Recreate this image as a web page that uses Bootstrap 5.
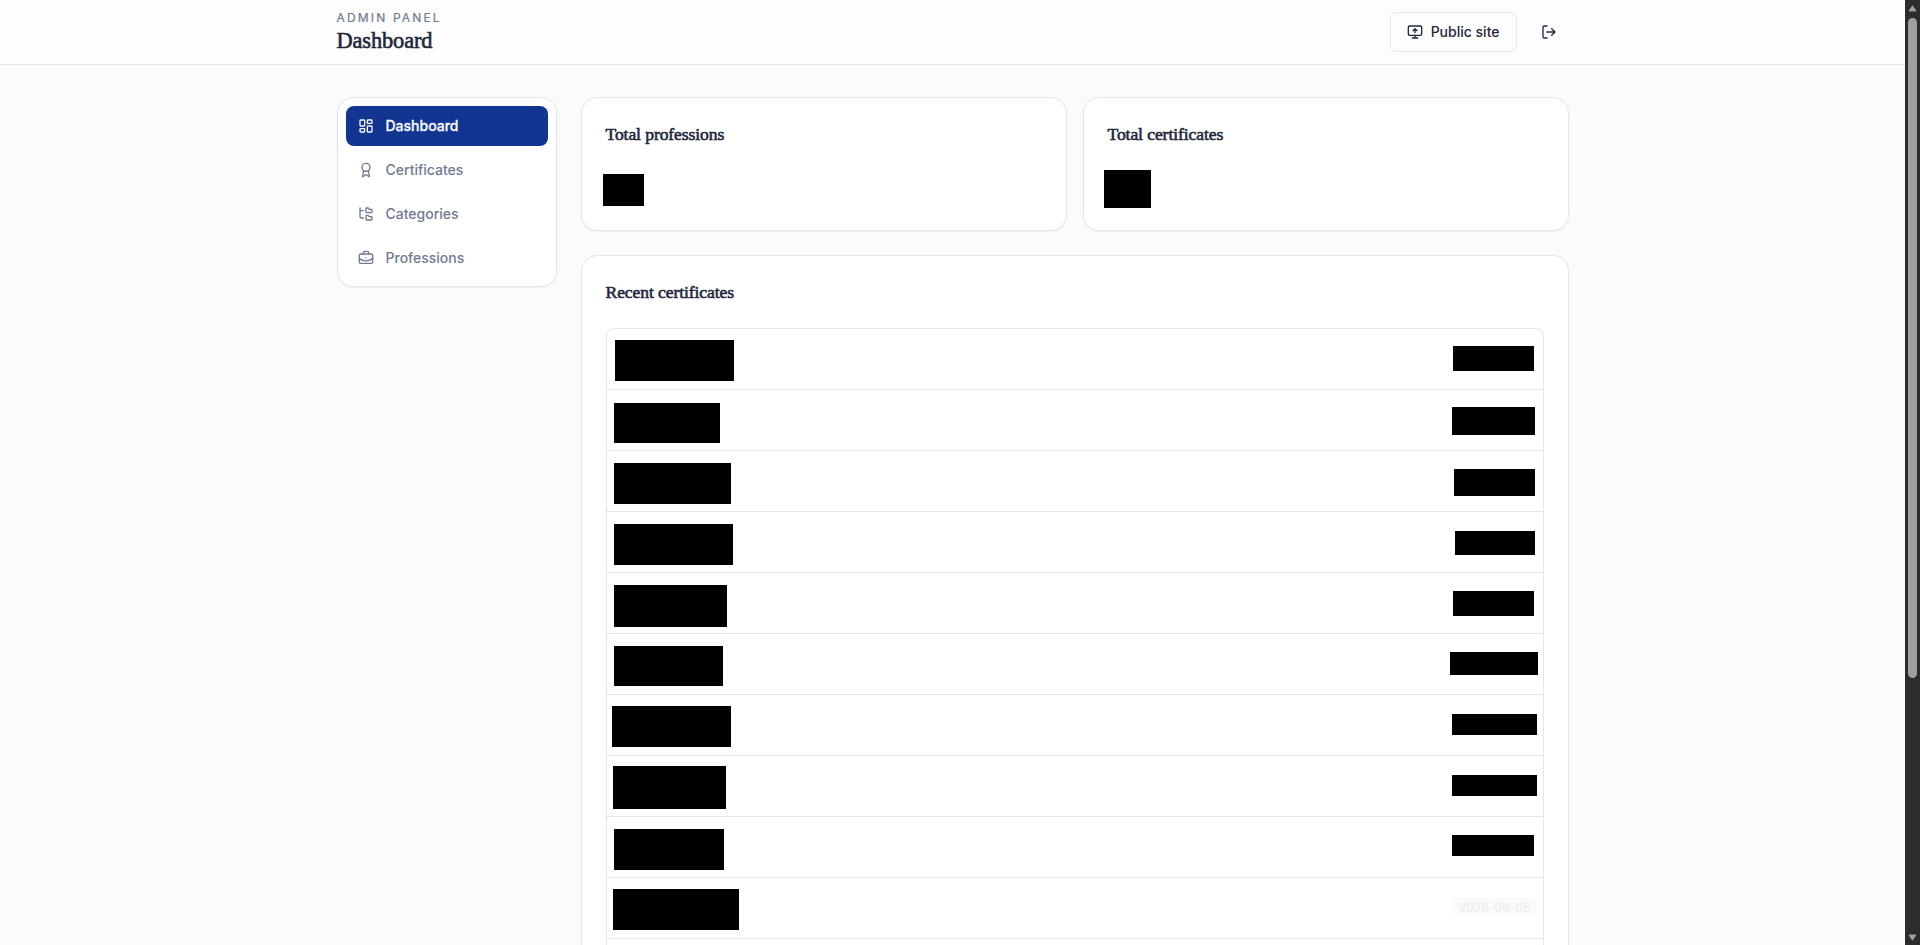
<!DOCTYPE html>
<html lang="en">
<head>
<meta charset="utf-8">
<meta name="viewport" content="width=device-width, initial-scale=1">
<title>Dashboard</title>
<link href="https://cdn.jsdelivr.net/npm/bootstrap@5.3.0/dist/css/bootstrap.min.css" rel="stylesheet">
<style>
  :root { --line: #e4e7e9; --ink: #1d283a; --muted: #6f7b8f; --brand: #133592; }
  html, body { height: 100%; overflow: hidden; }
  body { font-family: Inter, "Liberation Sans", sans-serif; font-size: 14px; line-height: 20px; color: var(--ink); background: #fbfbfb; padding-right: 15px; }
  svg { flex: none; }
  .ico { width: 16px; height: 16px; fill: none; stroke: currentColor; stroke-width: 2; stroke-linecap: round; stroke-linejoin: round; }
  .shell { width: 1232px; margin: 0 auto; }
  .topbar { height: 65px; background: #fdfdfd; border-bottom: 1px solid var(--line); }
  .eyebrow { font-size: 12px; line-height: 16px; letter-spacing: 2.16px; color: var(--muted); -webkit-text-stroke: .2px currentColor; }
  .display-face { font-family: "Liberation Serif", serif; font-weight: 400; margin: 0; -webkit-text-stroke: .6px currentColor; }
  .page-title { font-size: 22.4px; line-height: 28px; letter-spacing: -.12px; padding-top: 1px; margin-bottom: -1px; }
  .card-heading { font-size: 17.6px; line-height: 24px; letter-spacing: -.1px; margin-top: -.5px; margin-bottom: .5px; }
  .btn-site { --bs-btn-font-size: 14px; --bs-btn-line-height: 20px; --bs-btn-padding-x: 16px; --bs-btn-border-color: var(--line); --bs-btn-color: var(--ink); --bs-btn-bg: #fdfdfd; --bs-btn-border-radius: 6px; height: 40px; font-weight: 500; }
  .btn-exit { width: 40px; height: 40px; --bs-btn-color: var(--ink); --bs-btn-border-color: transparent; }
  .panel { background: #fff; border: 1px solid var(--line); border-radius: 16px; box-shadow: 0 1px 2px rgba(0,0,0,.05); }
  .side { width: 220px; height: 190px; padding: 8px; }
  .side .nav-link { height: 40px; padding: 0 12px; font-weight: 500; color: var(--muted); border-radius: 8px; --bs-nav-pills-link-active-bg: var(--brand); }
  .side .nav-link.active { color: #f5f8ff; background: var(--brand); -webkit-text-stroke: .3px currentColor; }
  .stat { height: 134px; padding: 24px; }
  .recent { height: 760px; padding: 24px; }
  .rows { border: 1px solid var(--line); border-radius: 8px; margin-top: 24px; }
  .entry { height: 61px; padding: 0 8px 0 7.4px; border-bottom: 1px solid var(--line); }
  .mask { display: block; flex: none; background: #000; }
  .date-chip { height: 18px; width: 83px; margin: 20px -1px 0 0; padding-left: 1px; font-size: 12px; line-height: 19px; letter-spacing: .05px; color: #ebecee; background: #fafafb; border-radius: 4px; text-align: center; }
  .scroller { position: fixed; inset: 0 0 0 auto; width: 15px; background: #2c2c2c; }
  .scroller i { width: 9px; height: 660px; background: #9f9f9f; border-radius: 5px; margin-top: 6px; }
</style>
</head>
<body>
<header class="topbar">
  <div class="shell h-100 d-flex align-items-center justify-content-between">
    <div>
      <div class="eyebrow">ADMIN PANEL</div>
      <h1 class="display-face page-title">Dashboard</h1>
    </div>
    <div class="d-flex align-items-center" style="gap:12px">
      <a class="btn btn-site d-flex align-items-center gap-2" href="#"><svg class="ico" viewBox="0 0 24 24"><path d="m9 10 3-3 3 3M12 13V7"/><rect width="20" height="14" x="2" y="3" rx="2"/><path d="M12 17v4M8 21h8"/></svg>Public site</a>
      <button class="btn btn-exit p-0 d-flex align-items-center justify-content-center" type="button" aria-label="Log out"><svg class="ico" viewBox="0 0 24 24"><path d="m16 17 5-5-5-5M21 12H9M9 21H5a2 2 0 0 1-2-2V5a2 2 0 0 1 2-2h4"/></svg></button>
    </div>
  </div>
</header>
<div class="shell d-flex align-items-start gap-4" style="padding-top:32px">
  <aside class="panel side">
    <nav class="nav nav-pills flex-column gap-1">
      <a class="nav-link active d-flex align-items-center" style="gap:12px" href="#"><svg class="ico" viewBox="0 0 24 24"><rect width="7" height="9" x="3" y="3" rx="1"/><rect width="7" height="5" x="14" y="3" rx="1"/><rect width="7" height="9" x="14" y="12" rx="1"/><rect width="7" height="5" x="3" y="16" rx="1"/></svg>Dashboard</a>
      <a class="nav-link d-flex align-items-center" style="gap:12px" href="#"><svg class="ico" viewBox="0 0 24 24"><path d="m15.477 12.89 1.515 8.526a.5.5 0 0 1-.81.47l-3.58-2.687a1 1 0 0 0-1.197 0l-3.586 2.686a.5.5 0 0 1-.81-.469l1.514-8.526"/><circle cx="12" cy="8" r="6"/></svg>Certificates</a>
      <a class="nav-link d-flex align-items-center" style="gap:12px" href="#"><svg class="ico" viewBox="0 0 24 24"><path d="M20 10a1 1 0 0 0 1-1V6a1 1 0 0 0-1-1h-2.500a1 1 0 0 1-.8-.4l-.9-1.200A1 1 0 0 0 15 3h-2a1 1 0 0 0-1 1v5a1 1 0 0 0 1 1Z"/><path d="M20 21a1 1 0 0 0 1-1v-3a1 1 0 0 0-1-1h-2.900a1 1 0 0 1-.88-.55l-.42-.85a1 1 0 0 0-.92-.6H13a1 1 0 0 0-1 1v5a1 1 0 0 0 1 1Z"/><path d="M3 5a2 2 0 0 0 2 2h3M3 3v13a2 2 0 0 0 2 2h3"/></svg>Categories</a>
      <a class="nav-link d-flex align-items-center" style="gap:12px" href="#"><svg class="ico" viewBox="0 0 24 24"><path d="M12 12h.01M16 6V4a2 2 0 0 0-2-2h-4a2 2 0 0 0-2 2v2M22 13a18.150 18.150 0 0 1-20 0"/><rect width="20" height="14" x="2" y="6" rx="2"/></svg>Professions</a>
    </nav>
  </aside>
  <main class="flex-grow-1">
    <div class="d-flex gap-3 mb-4">
      <section class="panel stat flex-fill w-50">
        <h2 class="display-face card-heading">Total professions</h2>
        <span class="mask" style="width:41px;height:32px;margin:28px 0 0 -3px"></span>
      </section>
      <section class="panel stat flex-fill w-50">
        <h2 class="display-face card-heading">Total certificates</h2>
        <span class="mask" style="width:47px;height:38px;margin:24px 0 0 -3.5px"></span>
      </section>
    </div>
    <section class="panel recent">
      <h2 class="display-face card-heading">Recent certificates</h2>
      <div class="rows">
        <div class="entry d-flex align-items-start justify-content-between"><span class="mask" style="width:119px;height:41px;margin:11px 0 0 1px"></span><span class="mask" style="width:81px;height:25px;margin:17px 1px 0 0"></span></div>
        <div class="entry d-flex align-items-start justify-content-between"><span class="mask" style="width:106px;height:40px;margin:13px 0 0 0"></span><span class="mask" style="width:83px;height:28px;margin:17px 0 0 0"></span></div>
        <div class="entry d-flex align-items-start justify-content-between"><span class="mask" style="width:117px;height:41px;margin:12px 0 0 0"></span><span class="mask" style="width:81px;height:27px;margin:18px 0 0 0"></span></div>
        <div class="entry d-flex align-items-start justify-content-between"><span class="mask" style="width:119px;height:41px;margin:12px 0 0 0"></span><span class="mask" style="width:80px;height:24px;margin:19px 0 0 0"></span></div>
        <div class="entry d-flex align-items-start justify-content-between"><span class="mask" style="width:113px;height:42px;margin:12px 0 0 0"></span><span class="mask" style="width:81px;height:25px;margin:18px 1px 0 0"></span></div>
        <div class="entry d-flex align-items-start justify-content-between"><span class="mask" style="width:109px;height:40px;margin:12px 0 0 0"></span><span class="mask" style="width:88px;height:23px;margin:18px -3px 0 0"></span></div>
        <div class="entry d-flex align-items-start justify-content-between"><span class="mask" style="width:119px;height:41px;margin:11px 0 0 -2px"></span><span class="mask" style="width:85px;height:21px;margin:19px -2px 0 0"></span></div>
        <div class="entry d-flex align-items-start justify-content-between"><span class="mask" style="width:113px;height:43px;margin:10px 0 0 -1px"></span><span class="mask" style="width:85px;height:21px;margin:19px -2px 0 0"></span></div>
        <div class="entry d-flex align-items-start justify-content-between"><span class="mask" style="width:110px;height:41px;margin:12px 0 0 0"></span><span class="mask" style="width:82px;height:21px;margin:18px 1px 0 0"></span></div>
        <div class="entry d-flex align-items-start justify-content-between"><span class="mask" style="width:126px;height:41px;margin:11px 0 0 -1px"></span><span class="date-chip">2026-09-05</span></div>
        <div class="entry"></div>
      </div>
    </section>
  </main>
</div>
<div class="scroller d-flex flex-column align-items-center" aria-hidden="true">
  <svg width="9" height="7" viewBox="0 0 9 7" style="margin-top:5px"><path d="M4.500.8 8 6H1Z" fill="#9f9f9f" stroke="#9f9f9f" stroke-linejoin="round"/></svg>
  <i></i>
  <svg class="mt-auto" width="9" height="7" viewBox="0 0 9 7" style="margin-bottom:4px"><path d="M4.500 6.200 8 1H1Z" fill="#9f9f9f" stroke="#9f9f9f" stroke-linejoin="round"/></svg>
</div>
<script src="https://cdn.jsdelivr.net/npm/bootstrap@5.3.0/dist/js/bootstrap.bundle.min.js"></script>
</body>
</html>
